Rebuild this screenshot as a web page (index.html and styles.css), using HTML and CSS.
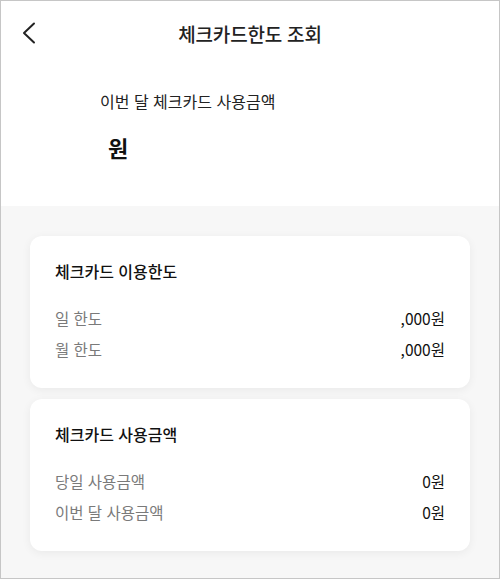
FILE: index.html
```html
<!DOCTYPE html>
<html lang="ko">
<head>
    <meta charset="UTF-8">
    <meta name="viewport" content="width=device-width, initial-scale=1.0">
    <title>체크카드한도 조회</title>
    <link rel="stylesheet" href="styles.css">
</head>
<body>

<div class="screen">
    <div class="top">
        <!-- Header -->
        <div class="header">
            <button class="back" type="button" aria-label="뒤로">
                <svg width="16" height="22" viewBox="0 0 16 22">
                    <polyline points="13,1.5 3,11 13,20.5" fill="none" stroke="#222" stroke-width="2" stroke-linecap="round" stroke-linejoin="round"/>
                </svg>
            </button>
            <h1 class="title">체크카드한도 조회</h1>
            <span></span>
        </div>

        <!-- Monthly total -->
        <div class="summary">
            <p class="summary-label">이번 달 체크카드 사용금액</p>
            <p class="summary-amount"><span id="monthTotal"></span>원</p>
        </div>
    </div>

    <div class="cards">
        <div class="card">
            <h2 class="card-title">체크카드 이용한도</h2>
            <div class="row">
                <span class="row-label">일 한도</span>
                <span class="row-value">,000원</span>
            </div>
            <div class="row">
                <span class="row-label">월 한도</span>
                <span class="row-value">,000원</span>
            </div>
        </div>

        <div class="card">
            <h2 class="card-title">체크카드 사용금액</h2>
            <div class="row">
                <span class="row-label">당일 사용금액</span>
                <span class="row-value">0원</span>
            </div>
            <div class="row">
                <span class="row-label">이번 달 사용금액</span>
                <span class="row-value">0원</span>
            </div>
        </div>
    </div>
</div>

</body>
</html>
```

FILE: styles.css
```css
body { margin: 0; font-family: "Noto Sans CJK KR", "Noto Sans", sans-serif; color: #111; }
p, h1, h2 { margin: 0; }

.screen { height: 579px; box-sizing: border-box; border: 1px solid #c6c6c6; background: #f7f7f7; display: flex; flex-direction: column; }
.top { background: #fff; padding-bottom: 44px; }

/* header */
.header { height: 64px; display: grid; grid-template-columns: 1fr auto 1fr; align-items: center; }
.back { justify-self: start; margin-left: 20px; padding: 0; border: none; background: none; display: flex; cursor: pointer; }
.title { font-size: 19px; font-weight: 500; color: #222; letter-spacing: -0.2px; }

/* summary */
.summary { margin-top: 24px; padding-left: 99px; }
.summary-label { font-size: 16px; line-height: 24px; color: #222; }
.summary-amount { margin-top: 19px; padding-left: 8px; font-size: 22px; font-weight: 700; line-height: 30px; color: #111; }

/* cards */
.cards { padding: 30px 29px 0; display: flex; flex-direction: column; gap: 11px; }
.card { background: #fff; border-radius: 12px; padding: 24px 25px; box-shadow: 0 2px 10px rgba(0,0,0,0.06); }
.card-title { font-size: 16px; font-weight: 500; line-height: 22px; color: #111; margin-bottom: 20px; }
.row { display: flex; justify-content: space-between; align-items: center; height: 31px; font-size: 15.5px; }
.row-label { color: #7a7a7a; }
.row-value { color: #111; }
```
